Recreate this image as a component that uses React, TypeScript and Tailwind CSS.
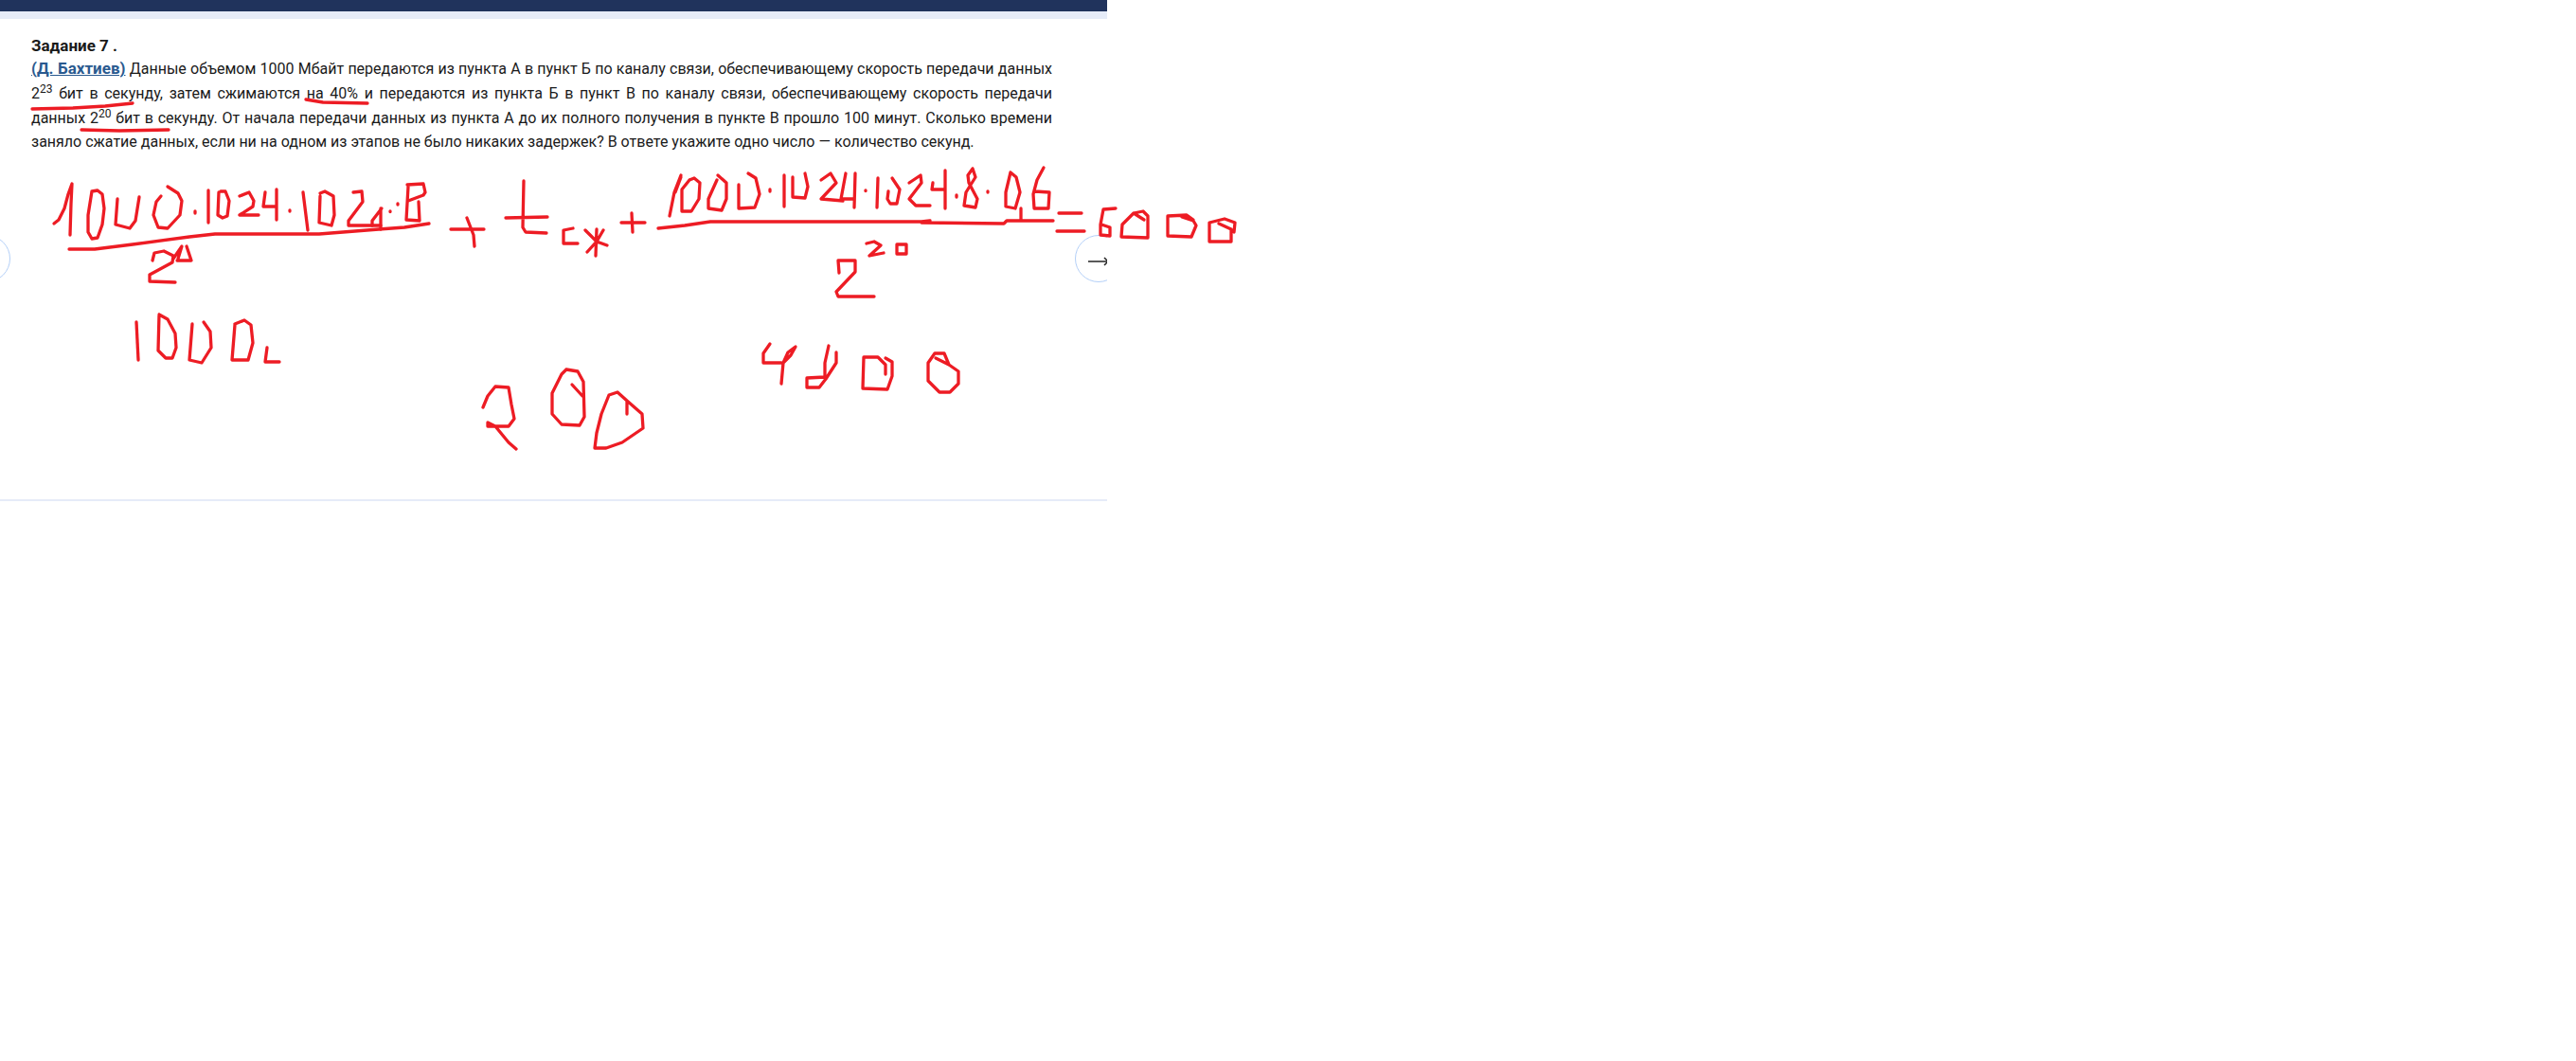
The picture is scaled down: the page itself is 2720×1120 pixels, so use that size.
const ink = "#ed1c24";

// hand drawn strokes over the task, coordinates in page pixels
const strokes = [
  // underlines in the text
  "M34 115 L77 114 L111 112 L140 109",
  "M323 105 L341 108 L388 109",
  "M86 137 L126 138 L178 137",
  // left numerator
  "M57 236 L62 232 L68 220 L72 205 L76 194 L75 215 L74 248",
  "M97 202 L93 227 L93 245 L97 252 L103 251 L108 237 L110 220 L108 205 L103 201 L97 202",
  "M124 210 L122 237 L137 241 L143 233 L147 208",
  "M177 197 L188 204 L192 212 L190 227 L177 241 L167 240 L162 227 L165 213 L170 207",
  "M206 223 L206 225",
  "M220 201 L220 235",
  "M231 203 L230 227 L235 230 L240 228 L242 212 L238 202 L233 202",
  "M253 207 L263 203 L268 212 L267 218 L253 227 L273 227",
  "M280 203 L278 218 L292 218 M292 200 L292 232",
  "M306 222 L306 223",
  "M320 203 L325 243",
  "M338 207 L337 235 L350 238 L353 227 L352 207 L343 202 L338 204",
  "M373 203 L382 202 L383 213 L368 233 L368 238 L402 238",
  "M403 220 L393 233 L393 238 M402 220 L402 242",
  "M412 223 L412 223.5 M420 215 L420 216",
  "M430 195 L447 194 L449 203 L447 206 L431 212 M431 197 L429 232 L443 233 L442 213",
  "M73 263 L100 263 L140 258 L200 250 L227 247 L337 247 L400 242 L427 240 L453 236",
  // left denominator
  "M161 275 L163 267 L173 265 L183 270 L182 277 L158 290 L158 297 L185 298",
  "M183 273 L192 260 L188 273 M197 260 L202 275 L187 275",
  // 1000 c
  "M144 340 L146 380",
  "M168 332 L167 370 L175 378 L182 378 L186 367 L185 352 L177 337 L168 332",
  "M203 342 L200 380 L213 383 L223 367 L222 350 L215 340",
  "M248 343 L245 380 L262 380 L267 362 L265 343 L258 338 L248 342",
  "M282 367 L280 382 L295 382",
  // + t cж +
  "M476 242 L511 242 M493 230 L500 248 L501 260",
  "M553 191 L552 240 L555 245 L577 246 M534 230 L578 229",
  "M605 241 L595 243 L595 257 L610 257",
  "M618 243 L630 255 L637 243 M630 242 L629 270 M620 266 L630 255 L641 259",
  "M656 235 L681 235 M667 225 L668 245",
  // right numerator
  "M695 241 L723 238 L750 234 L973 234 L982 233 L973 235 L1060 236 L1063 233 L1112 233",
  "M719 185 L712 203 L707 228 M719 187 L713 203",
  "M728 190 L720 200 L720 223 L730 223 L738 210 L739 193 L733 188 L728 190",
  "M758 185 L767 193 L767 210 L762 222 L748 220 L748 210 L757 190",
  "M780 195 L780 220 L797 219 L802 205 L798 188 L790 183",
  "M813 200 L813 202",
  "M828 185 L828 218",
  "M837 187 L837 208 L850 209 L853 197 L850 183",
  "M867 190 L877 183 L883 193 L867 210 L890 212",
  "M893 183 L888 210 L902 210 M903 183 L902 219",
  "M914 201 L914 201.5",
  "M927 188 L926 219",
  "M938 202 L937 210 L940 215 L947 215 L950 200 L942 188",
  "M960 193 L972 185 L973 193 L960 210 L967 217 L982 217",
  "M998 180 L998 220 M985 193 L984 200 L998 200",
  "M1010 206 L1010 208",
  "M1027 178 L1030 187 L1020 203 L1018 217 L1030 219 L1032 210 L1023 193 L1022 185 L1027 178",
  "M1043 202 L1043 203",
  "M1067 182 L1062 203 L1062 218 L1072 220 L1077 203 L1073 187 L1067 182",
  "M1078 220 L1078 232",
  "M1102 177 L1095 190 L1091 205 L1092 220 L1107 220 L1108 203 L1093 202",
  // right denominator
  "M886 288 L885 275 L903 275 L903 287 L883 308 L885 313 L923 313",
  "M915 257 L923 255 L930 259 L918 270 L933 267",
  "M947 258 L957 258 L957 268 L947 268 Z",
  // = 6000
  "M1118 225 L1142 225 M1116 244 L1145 244",
  "M1178 220 L1165 221 L1162 237 L1162 248 L1172 249 L1172 240 L1163 237",
  "M1197 225 L1185 237 L1184 250 L1212 251 L1212 228 L1207 223 L1197 225 L1208 232",
  "M1248 229 L1260 233 L1263 238 L1258 250 L1233 249 L1233 228 L1253 227 L1260 232",
  "M1287 236 L1300 242 L1300 255 L1277 255 L1277 235 L1293 231 L1304 235 L1303 245",
  // 200
  "M510 430 L515 418 L523 408 L537 409 L540 427 L543 442 L537 450 L515 450 L515 446 L523 450 L537 467 L545 474",
  "M598 390 L610 392 L616 403 L617 440 L612 449 L593 448 L583 437 L583 415 L593 395 L598 390 M604 406 L615 418",
  "M662 437 L662 423 L678 437 L679 452 L657 467 L640 473 L628 473 L630 457 L635 437 L643 417 L652 414 L662 423",
  // 4200
  "M813 363 L806 373 L806 383 L825 383 M825 405 L827 383 L832 372 L840 366 L835 375 L827 383",
  "M875 365 L871 383 L871 398 L852 399 L852 409 L865 409 L872 400 L883 383 L883 372",
  "M935 395 L935 385 L927 377 L912 377 L911 410 L937 411 L942 397 L942 382 L935 378",
  "M988 378 L1002 385 L1012 392 L1012 405 L1003 414 L992 414 L980 402 L980 383 L987 373 L997 373 L1002 385",
];

export default function App() {
  return (
    <div className="relative min-h-[1120px] bg-white font-['Roboto',sans-serif] text-[#1a1a1a]">
      <div className="w-[1169px] overflow-hidden">
        <div className="h-[12px] bg-[#20335c]" />
        <div className="h-[8px] bg-[#e6ecf8]" />
        <div className="relative h-[509px] border-b-2 border-[#e6ebf8] px-[33px] pt-[16px] text-[16px] leading-[24px]">
          <p className="text-[17px] font-bold">Задание 7 .</p>
          <p className="w-[1078px] text-justify">
            <a className="text-[17px] font-bold text-[#2a5a8f] underline">(Д. Бахтиев)</a> Данные объемом 1000 Мбайт
            передаются из пункта А в пункт Б по каналу связи, обеспечивающему скорость передачи данных 2
            <sup className="static align-super leading-[19px]">23</sup> бит в секунду, затем сжимаются на 40% и передаются из пункта Б в пункт В по каналу
            связи, обеспечивающему скорость передачи данных 2<sup className="static align-super leading-[19px]">20</sup> бит в секунду. От начала передачи
            данных из пункта А до их полного получения в пункте В прошло 100 минут. Сколько времени заняло
            сжатие данных, если ни на одном из этапов не было никаких задержек? В ответе укажите одно число —
            количество секунд.
          </p>
          <div className="absolute -left-[39px] top-[228px] h-[50px] w-[50px] rounded-full border border-[#b4d0f8]" />
          <div className="absolute left-[1135px] top-[228px] flex h-[50px] w-[50px] items-center pl-[13px] pt-[6px] rounded-full border border-[#b4d0f8]">
            <svg width="22" height="10" viewBox="0 0 22 10" fill="none" strokeWidth="2">
              <path d="M0 5 H20" stroke="#5a5a5a" />
              <path d="M17 1 L21 5 L17 9" stroke="#222" strokeWidth="1.5" />
            </svg>
          </div>
        </div>
      </div>
      <svg className="pointer-events-none absolute left-0 top-0" width="1320" height="520" fill="none" stroke={ink} strokeWidth="3.3" strokeLinecap="round" strokeLinejoin="round">
        {strokes.map((d, i) => (
          <path key={i} d={d} />
        ))}
      </svg>
    </div>
  );
}
